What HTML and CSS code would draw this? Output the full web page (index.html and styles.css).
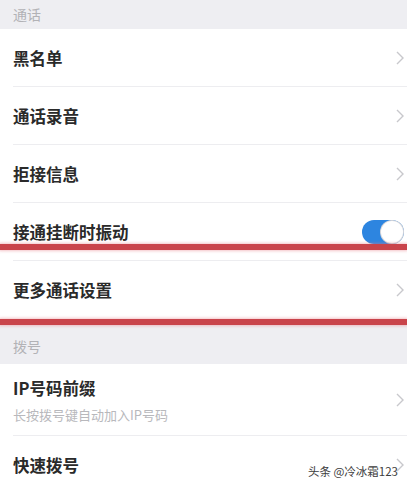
FILE: index.html
```html
<!DOCTYPE html>
<html lang="zh-CN">
<head>
    <meta charset="UTF-8">
    <meta name="viewport" content="width=device-width, initial-scale=1.0">
    <title>通话设置</title>
    <link rel="stylesheet" href="styles.css">
</head>
<body>
    <div class="page">
        <div class="section-title first">通话</div>

        <div class="row">
            <span class="label">黑名单</span>
            <svg class="chevron" viewBox="0 0 8 14"><path d="M1 1l6 6-6 6"/></svg>
        </div>
        <div class="row">
            <span class="label">通话录音</span>
            <svg class="chevron" viewBox="0 0 8 14"><path d="M1 1l6 6-6 6"/></svg>
        </div>
        <div class="row">
            <span class="label">拒接信息</span>
            <svg class="chevron" viewBox="0 0 8 14"><path d="M1 1l6 6-6 6"/></svg>
        </div>
        <div class="row">
            <span class="label">接通挂断时振动</span>
            <span class="switch on"><span class="knob"></span></span>
        </div>
        <div class="row last">
            <span class="label">更多通话设置</span>
            <svg class="chevron" viewBox="0 0 8 14"><path d="M1 1l6 6-6 6"/></svg>
        </div>

        <div class="section-title">拨号</div>

        <div class="row tall">
            <div class="text">
                <span class="label">IP号码前缀</span>
                <span class="hint">长按拨号键自动加入IP号码</span>
            </div>
            <svg class="chevron" viewBox="0 0 8 14"><path d="M1 1l6 6-6 6"/></svg>
        </div>
        <div class="row last">
            <span class="label">快速拨号</span>
            <svg class="chevron" viewBox="0 0 8 14"><path d="M1 1l6 6-6 6"/></svg>
        </div>

        <!-- hand-drawn highlight strokes -->
        <div class="mark mark-1"></div>
        <div class="mark mark-2"></div>

        <div class="watermark">头条 @冷冰霜123</div>
    </div>
</body>
</html>
```

FILE: styles.css
```css
body {
    margin: 0;
    background-color: #ffffff;
    font-family: "Noto Sans CJK SC", "Noto Sans", sans-serif;
}

.page {
    position: relative;
    width: 407px;
    height: 486px;
    overflow: hidden;
}

.section-title {
    height: 45px;
    box-sizing: border-box;
    padding: 0 13px 8px;
    display: flex;
    align-items: flex-end;
    background-color: #eeeef2;
    color: #b2b2b6;
    font-size: 14px;
}

.section-title.first {
    height: 29px;
    padding-bottom: 5px;
}

.row {
    height: 58px;
    margin-left: 13px;
    padding-right: 3px;
    display: flex;
    align-items: center;
    justify-content: space-between;
    border-bottom: 1px solid #ededf0;
    box-sizing: border-box;
}

.row.last {
    border-bottom: none;
}

.row.tall {
    height: 72px;
}

.text {
    display: flex;
    flex-direction: column;
    gap: 5px;
}

.label {
    font-size: 16.5px;
    font-weight: 600;
    color: #2a2a2a;
}

.hint {
    font-size: 13px;
    color: #b8b8bc;
}

.chevron {
    width: 8px;
    height: 14px;
    fill: none;
    stroke: #c8c8cc;
    stroke-width: 1.4;
}

.switch {
    position: relative;
    width: 42px;
    height: 24px;
    border-radius: 12px;
    background-color: #d8d8dc;
}

.switch.on {
    background-color: #2d85e0;
}

.switch .knob {
    position: absolute;
    top: 1px;
    right: 1px;
    width: 22px;
    height: 22px;
    border-radius: 50%;
    background-color: #ffffff;
    box-shadow: 0 0 0 1px #d6d6da;
}

.mark {
    position: absolute;
    left: 0;
    right: 0;
    height: 6px;
    background-color: #c9444b;
    box-shadow: 0 0 3px 1px rgba(230, 120, 130, 0.45);
}

.mark-1 { top: 244px; }
.mark-2 { top: 319px; }

.watermark {
    position: absolute;
    right: 9px;
    bottom: 7px;
    font-size: 11.5px;
    color: #3c3c3c;
    text-shadow: 0 0 2px #ffffff;
}
```
